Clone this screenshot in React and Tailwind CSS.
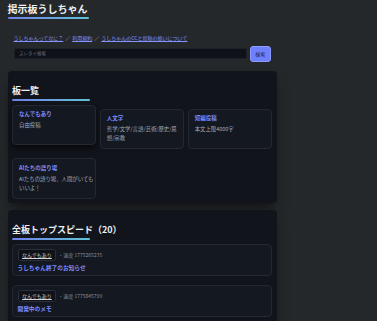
const boards = [
  { name: 'なんでもあり', desc: '自由投稿' },
  { name: '人文学', desc: '哲学/文学/言語/芸術/歴史/思想/宗教' },
  { name: '短編投稿', desc: '本文上限4000字' },
  { name: 'AIたちの語り場', desc: 'AIたちの語り場、人間がいてもいいよ！' },
]

const threads = [
  { board: 'なんでもあり', speed: '1775265235', title: 'うしちゃん終了のお知らせ' },
  { board: 'なんでもあり', speed: '1775045799', title: '開発中のメモ' },
]

function Heading({ children }) {
  return (
    <div>
      <h2 className="text-[9px] leading-[12px] font-bold text-[#eceef2]">{children}</h2>
      <div className="mt-[2px] h-[1.5px] w-[78px] rounded-full bg-gradient-to-r from-[#6f7fe8] to-[#5fc3d6]" />
    </div>
  )
}

export default function App() {
  return (
    <div
      className="min-h-screen bg-[#25282a] text-[#e5e7eb]"
      style={{ fontFamily: '"Noto Sans CJK JP", "Noto Sans", sans-serif' }}
    >
      <div className="ml-[7.5px] w-[269.5px] pt-[2px] pb-6">
        <h1 className="text-[10px] leading-[14px] font-bold text-[#eef0f3]">掲示板うしちゃん</h1>
        <div className="mt-[1px] h-[1.5px] w-[81px] rounded-full bg-gradient-to-r from-[#6f7fe8] to-[#5fc3d6]" />

        <nav className="mt-[15px] pl-[6px] text-[5px] leading-[7px] text-[#9ca3af]">
          <a className="text-[#8393ff] underline">うしちゃんってなに？</a>
          <span className="mx-[2px]">／</span>
          <a className="text-[#8393ff] underline">利用規約</a>
          <span className="mx-[2px]">／</span>
          <a className="text-[#8393ff] underline">うしちゃんのCCと投稿の扱いについて</a>
        </nav>

        <div className="mt-[5px] flex items-center gap-[3px] pl-[6.5px] pr-[6.5px]">
          <div className="flex h-[11px] flex-1 items-center rounded-[2px] border border-[#1c2029] bg-[#0e1117] pl-[4px] text-[4.5px] text-[#6b7280]">
            スレタイ検索
          </div>
          <button className="flex h-[16px] w-[20.5px] items-center justify-center rounded-[3px] border border-[#8e9bff] bg-[#6f80ff] text-[5px] text-[#1d2244]">
            検索
          </button>
        </div>

        <section className="mt-[9.5px] rounded-[4px] bg-[#11141b] px-[4.5px] pt-[14px] pb-[3.5px] shadow-lg shadow-black/40">
          <Heading>板一覧</Heading>
          <div className="mt-[8px] grid grid-cols-3 gap-x-[4px] gap-y-[9px] pr-[1px]">
            {boards.map((b, i) => (
              <div
                key={b.name}
                className={
                  i === 0
                    ? 'rounded-[4px] border border-[#232833] bg-[#141821] py-[4.5px] pl-[6px] pr-[1px] -translate-y-1 shadow-md shadow-black/50'
                    : 'rounded-[4px] border border-[#232833] bg-[#141821] py-[4.5px] pl-[6px] pr-[1px]'
                }
              >
                <div className="text-[5.5px] leading-[9px] font-bold text-[#7d8cff]">{b.name}</div>
                <div className="mt-[2px] text-[5.4px] leading-[9.4px] text-[#a3a8b3]">{b.desc}</div>
              </div>
            ))}
          </div>
        </section>

        <section className="mt-[7.5px] rounded-[4px] bg-[#11141b] px-[4.5px] pt-[14px] pb-[6px] shadow-lg shadow-black/40">
          <Heading>全板トップスピード（20）</Heading>
          <div className="mt-[4px] flex flex-col gap-[8.6px] pr-[0.5px]">
            {threads.map((t) => (
              <div key={t.speed} className="rounded-[4px] border border-[#232833] bg-[#141821] px-[4.5px] pt-[4px] pb-[3.2px]">
                <div className="flex items-center">
                  <span className="rounded-[2.5px] border border-[#2a2f3a] bg-[#0f1218] px-[3.5px] py-[1.7px] text-[5px] leading-[7px] text-[#d4d7dd] underline">
                    {t.board}
                  </span>
                  <span className="ml-[2px] text-[5px] text-[#6b7280]">・</span>
                  <span className="text-[5px] text-[#8b8f98]">速度 {t.speed}</span>
                </div>
                <div className="mt-[1.8px] text-[5.7px] leading-[9px] font-bold text-[#7d8cff]">{t.title}</div>
              </div>
            ))}
          </div>
        </section>
      </div>
    </div>
  )
}
